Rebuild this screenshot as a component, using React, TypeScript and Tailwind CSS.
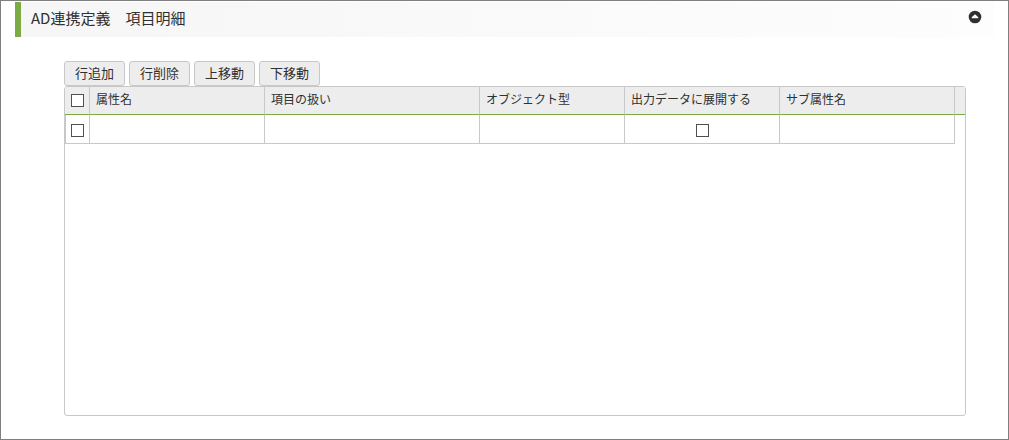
import { useState } from 'react'

const ACTIONS = ['行追加', '行削除', '上移動', '下移動']

const COLUMNS = [
  { label: '属性名', width: 'w-[175px]' },
  { label: '項目の扱い', width: 'w-[215px]' },
  { label: 'オブジェクト型', width: 'w-[145px]' },
  { label: '出力データに展開する', width: 'w-[155px]', checkbox: true },
  { label: 'サブ属性名', width: 'w-[175px]' },
]

function Checkbox({ label }: { label: string }) {
  return (
    <input
      type="checkbox"
      aria-label={label}
      className="block size-[13px] appearance-none border border-[#505050] bg-white checked:bg-[#7cab43]"
    />
  )
}

function SectionHeader({ open, onToggle }: { open: boolean; onToggle: () => void }) {
  return (
    <header className="flex h-[35px] items-start justify-between border-l-6 border-[#7cab43] bg-linear-to-r from-[#f6f6f6] to-[#fdfdfd] pr-3 pl-[10px]">
      <h1 className="pt-1 text-[15px] leading-6">AD連携定義　項目明細</h1>
      <button
        type="button"
        onClick={onToggle}
        aria-expanded={open}
        aria-label="開閉"
        className="mt-2 cursor-pointer"
      >
        <svg viewBox="0 0 14 14" className="size-[14px]" aria-hidden="true">
          <circle cx="7" cy="7" r="6.3" fill="#303030" />
          <path d="M7 4.2 10.3 7.3V8.2H3.7V7.3Z" fill="#fff" />
        </svg>
      </button>
    </header>
  )
}

function AttributeTable() {
  return (
    <div className="flex-1 rounded-[3px] border border-[#c8c8c8]">
      <table className="w-full table-fixed border-separate border-spacing-0 text-left text-xs">
        <thead className="bg-[#ededed]">
          <tr className="h-7">
            <th className="w-[25px] border-r border-b border-r-[#c8c8c8] border-b-[#7cab43] p-0 pl-[6px]">
              <Checkbox label="すべて選択" />
            </th>
            {COLUMNS.map((column) => (
              <th
                key={column.label}
                className={`${column.width} border-r border-b border-r-[#c8c8c8] border-b-[#7cab43] p-0 pb-1 pl-[6px] font-normal whitespace-nowrap`}
              >
                {column.label}
              </th>
            ))}
            <td className="border-b border-[#7cab43] p-0" />
          </tr>
        </thead>
        <tbody>
          <tr className="h-[29px]">
            <td className="border-r border-b border-l border-[#c8c8c8] p-0 pt-[2px] pl-[5px]">
              <Checkbox label="行を選択" />
            </td>
            {COLUMNS.map((column) => (
              <td key={column.label} className="border-r border-b border-[#c8c8c8] p-0 pt-[2px]">
                {column.checkbox && (
                  <div className="flex justify-center">
                    <Checkbox label={column.label} />
                  </div>
                )}
              </td>
            ))}
            <td className="p-0" />
          </tr>
        </tbody>
      </table>
    </div>
  )
}

export default function App() {
  const [open, setOpen] = useState(true)

  return (
    <main className="flex min-h-screen flex-col border border-[#7f7f7f] bg-white px-[14px] pt-px pb-[23px] font-['Noto_Sans_CJK_JP',sans-serif] text-[#303030]">
      <SectionHeader open={open} onToggle={() => setOpen(!open)} />
      {open && (
        <section className="mt-6 mr-7 ml-[49px] flex flex-1 flex-col">
          <div className="flex gap-1">
            {ACTIONS.map((action) => (
              <button
                key={action}
                type="button"
                className="h-[25px] cursor-pointer rounded-[3px] border border-[#c8c8c8] bg-[#ededed] px-[10px] pb-[2px] text-[13px] leading-5 hover:bg-[#e0e0e0]"
              >
                {action}
              </button>
            ))}
          </div>
          <AttributeTable />
        </section>
      )}
    </main>
  )
}
